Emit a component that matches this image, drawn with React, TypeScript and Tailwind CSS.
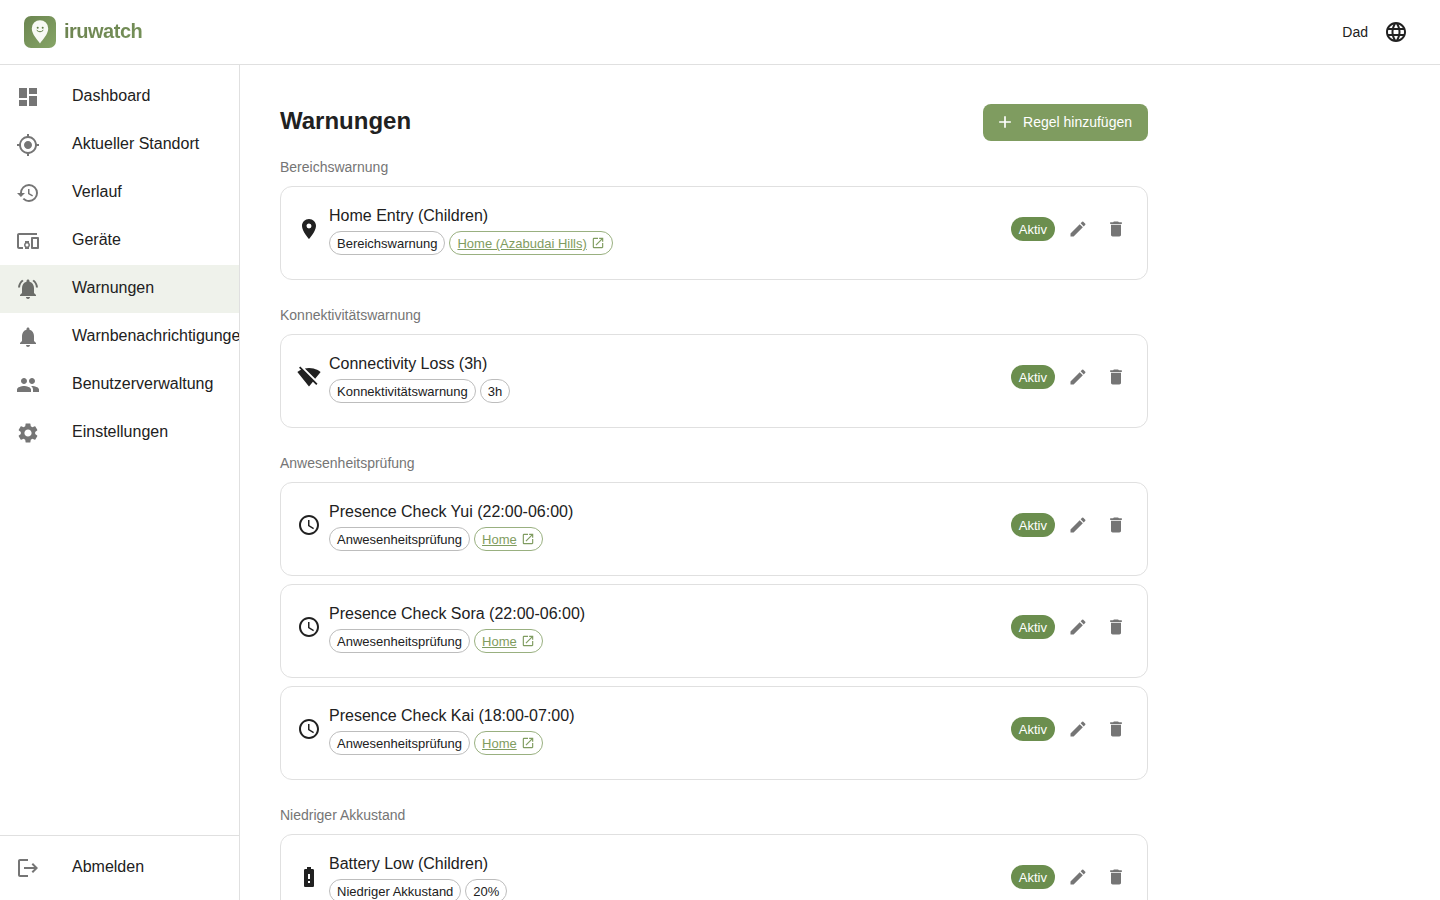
import type { ReactNode } from 'react';
import type { IconType } from 'react-icons';
import {
  MdAccessTime,
  MdAdd,
  MdBatteryAlert,
  MdDashboard,
  MdDelete,
  MdDevicesOther,
  MdEdit,
  MdHistory,
  MdLanguage,
  MdLocationOn,
  MdLogout,
  MdMyLocation,
  MdNotifications,
  MdNotificationsActive,
  MdOpenInNew,
  MdPeople,
  MdSettings,
} from 'react-icons/md';

type IconProps = { className?: string };
type IconComponent = IconType | ((props: IconProps) => ReactNode);
type Rule = { name: string; tag?: string; place?: string };
type Group = { title: string; icon: IconComponent; rules: Rule[] };

function WifiOffIcon({ className }: IconProps) {
  return (
    <svg viewBox="0 0 24 24" fill="currentColor" className={className} aria-hidden="true">
      <path d="M23.640 7c-.450-.340-4.930-4-11.640-4-1.500 0-2.890.190-4.150.480L18.180 13.800 23.640 7zm-6.600 8.220L3.270 1.440 2 2.720l2.050 2.060C1.910 5.760.590 6.820.360 7l11.630 14.490.010.010.010-.010 3.900-4.860 3.320 3.320 1.270-1.270-3.460-3.460z" />
    </svg>
  );
}

const navItems: { label: string; icon: IconComponent; active?: boolean }[] = [
  { label: 'Dashboard', icon: MdDashboard },
  { label: 'Aktueller Standort', icon: MdMyLocation },
  { label: 'Verlauf', icon: MdHistory },
  { label: 'Geräte', icon: MdDevicesOther },
  { label: 'Warnungen', icon: MdNotificationsActive, active: true },
  { label: 'Warnbenachrichtigungen', icon: MdNotifications },
  { label: 'Benutzerverwaltung', icon: MdPeople },
  { label: 'Einstellungen', icon: MdSettings },
];

const groups: Group[] = [
  {
    title: 'Bereichswarnung',
    icon: MdLocationOn,
    rules: [{ name: 'Home Entry (Children)', place: 'Home (Azabudai Hills)' }],
  },
  {
    title: 'Konnektivitätswarnung',
    icon: WifiOffIcon,
    rules: [{ name: 'Connectivity Loss (3h)', tag: '3h' }],
  },
  {
    title: 'Anwesenheitsprüfung',
    icon: MdAccessTime,
    rules: [
      { name: 'Presence Check Yui (22:00-06:00)', place: 'Home' },
      { name: 'Presence Check Sora (22:00-06:00)', place: 'Home' },
      { name: 'Presence Check Kai (18:00-07:00)', place: 'Home' },
    ],
  },
  {
    title: 'Niedriger Akkustand',
    icon: MdBatteryAlert,
    rules: [{ name: 'Battery Low (Children)', tag: '20%' }],
  },
];

function Logo() {
  return (
    <svg viewBox="0 0 32 32" className="size-8" aria-hidden="true">
      <defs>
        <linearGradient id="logo-bg" x1="0" y1="0" x2="1" y2="1">
          <stop offset="0" stopColor="#6b8550" />
          <stop offset="1" stopColor="#86a566" />
        </linearGradient>
      </defs>
      <rect width="32" height="32" rx="7" fill="url(#logo-bg)" />
      <path
        d="M16 27.500C13.600 23.600 7.800 18.400 7.800 12.400a8.200 8.200 0 0 1 16.400 0C24.200 18.400 18.400 23.600 16 27.500z"
        fill="#f7f9f4"
      />
      <circle cx="13.700" cy="11.700" r="1" fill="#5f7d45" />
      <circle cx="18.700" cy="11.700" r="1" fill="#5f7d45" />
      <path d="M13 14.500q3 2.800 6 0" fill="none" stroke="#5f7d45" strokeWidth="1" strokeLinecap="round" />
    </svg>
  );
}

function NavLink({ label, icon: Icon, active }: { label: string; icon: IconComponent; active?: boolean }) {
  return (
    <a
      href="#"
      aria-current={active ? 'page' : undefined}
      className={`flex h-12 items-center gap-8 px-4 ${active ? 'bg-[#eff2eb]' : ''}`}
    >
      <Icon className={`size-6 shrink-0 ${active ? 'text-[#6b6d69]' : 'text-[#757575]'}`} />
      <span className="pb-0.5 text-base whitespace-nowrap">{label}</span>
    </a>
  );
}

function Chip({ children }: { children: ReactNode }) {
  return (
    <span className="flex h-6 items-center rounded-full border border-[#bdbdbd] px-[7px] pt-0.5 text-[13px]">
      {children}
    </span>
  );
}

function RuleCard({ rule, type, icon: Icon }: { rule: Rule; type: string; icon: IconComponent }) {
  return (
    <li className="flex items-center gap-2 rounded-xl border border-[#e0e0e0] px-4 pt-4 pb-6">
      <Icon className="size-6 shrink-0" />
      <div className="flex min-w-0 flex-1 flex-col gap-1">
        <h3 className="h-6 text-base leading-[26px]">{rule.name}</h3>
        <div className="flex flex-wrap gap-1">
          <Chip>{type}</Chip>
          {rule.tag && <Chip>{rule.tag}</Chip>}
          {rule.place && (
            <a
              href="#"
              className="flex h-6 items-center gap-1 rounded-full border border-[#7f9c60]/80 px-[7px] text-[13px] text-[#7f9c60]"
            >
              <span className="pt-0.5 underline">{rule.place}</span>
              <MdOpenInNew className="size-3.5" />
            </a>
          )}
        </div>
      </div>
      <span className="flex h-6 items-center rounded-full bg-[#6b8e4e] px-2 pt-0.5 text-[13px] text-white">Aktiv</span>
      <button type="button" aria-label="Bearbeiten" className="p-[5px] text-[#757575]">
        <MdEdit className="size-5" />
      </button>
      <button type="button" aria-label="Löschen" className="p-[5px] text-[#757575]">
        <MdDelete className="size-5" />
      </button>
    </li>
  );
}

export default function App() {
  return (
    <div className="flex h-screen flex-col overflow-hidden bg-white font-['Liberation_Sans',Arial,sans-serif] text-[#212121]">
      <header className="flex h-[65px] shrink-0 items-center justify-between border-b border-[#e0e0e0] px-6">
        <a href="#" className="flex items-center gap-2">
          <Logo />
          <span className="bg-linear-to-br from-[#6b7f4e] to-[#76945a] bg-clip-text pb-0.5 text-xl leading-[30px] font-bold tracking-tight text-transparent">
            iruwatch
          </span>
        </a>
        <div className="flex items-center gap-2">
          <span className="text-sm">Dad</span>
          <button type="button" aria-label="Sprache" className="p-2">
            <MdLanguage className="size-6" />
          </button>
        </div>
      </header>
      <div className="flex min-h-0 flex-1">
        <nav className="flex w-60 shrink-0 flex-col overflow-hidden border-r border-[#e0e0e0]">
          <div className="flex-1 py-2">
            {navItems.map((item) => (
              <NavLink key={item.label} {...item} />
            ))}
          </div>
          <div className="border-t border-[#e0e0e0] py-2">
            <NavLink label="Abmelden" icon={MdLogout} />
          </div>
        </nav>
        <main className="min-w-0 flex-1 overflow-hidden px-10 pt-[39px]">
          <div className="max-w-[868px]">
            <div className="mb-[15px] flex items-center justify-between">
              <h1 className="pb-1 text-2xl font-bold">Warnungen</h1>
              <button
                type="button"
                className="flex h-[37px] items-center gap-2 rounded-lg bg-[#7f9c60] pr-4 pb-px pl-3 text-sm text-white"
              >
                <MdAdd className="size-5" />
                Regel hinzufügen
              </button>
            </div>
            <div className="flex flex-col gap-6">
              {groups.map((group) => (
                <section key={group.title}>
                  <h2 className="mb-2 text-sm leading-[22px] text-[#757575]">{group.title}</h2>
                  <ul className="flex flex-col gap-2">
                    {group.rules.map((rule) => (
                      <RuleCard key={rule.name} rule={rule} type={group.title} icon={group.icon} />
                    ))}
                  </ul>
                </section>
              ))}
            </div>
          </div>
        </main>
      </div>
    </div>
  );
}
